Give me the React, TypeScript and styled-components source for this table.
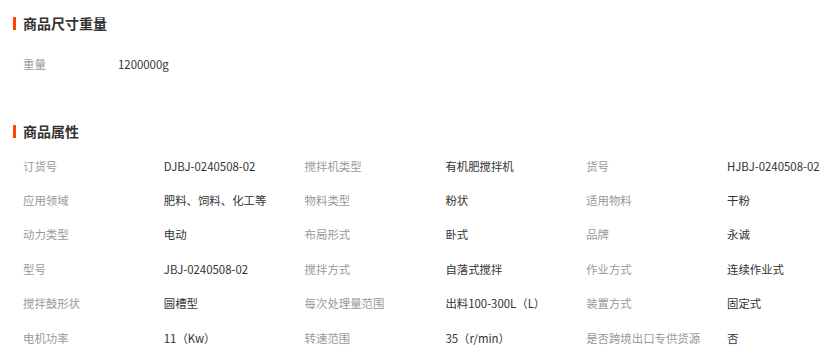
import React from "react";
import styled, { createGlobalStyle } from "styled-components";

const GlobalStyle = createGlobalStyle`
  body {
    margin: 0;
    background: #fff;
    font-family: "Noto Sans CJK SC", "Liberation Sans", sans-serif;
    font-size: 12px;
    color: #333;
  }
`;

const Page = styled.div`
  width: 830px;
  height: 355px;
  overflow: hidden;
  padding: 13px 0 0 13px;
  box-sizing: border-box;
`;

const Section = styled.section<{ $gap: number }>`
  margin-bottom: ${({ $gap }) => $gap}px;
`;

const Title = styled.h3`
  display: flex;
  align-items: center;
  margin: 0;
  height: 20px;
  font-size: 14px;
  font-weight: bold;
  color: #333;

  &::before {
    content: "";
    width: 3px;
    height: 13px;
    margin-right: 7px;
    background: #ff4400;
  }
`;

const Grid = styled.div<{ $cols: string; $top: number }>`
  display: grid;
  grid-template-columns: ${({ $cols }) => $cols};
  grid-auto-rows: 34.4px;
  padding: ${({ $top }) => $top}px 0 0 10px;
`;

const Cell = styled.div<{ $label?: boolean }>`
  display: flex;
  align-items: center;
  white-space: nowrap;
  font-size: 11.4px;
  color: ${({ $label }) => ($label ? "#999" : "#333")};
`;

const attrs: [string, string][] = [
  ["订货号", "DJBJ-0240508-02"],
  ["搅拌机类型", "有机肥搅拌机"],
  ["货号", "HJBJ-0240508-02"],
  ["应用领域", "肥料、饲料、化工等"],
  ["物料类型", "粉状"],
  ["适用物料", "干粉"],
  ["动力类型", "电动"],
  ["布局形式", "卧式"],
  ["品牌", "永诚"],
  ["型号", "JBJ-0240508-02"],
  ["搅拌方式", "自落式搅拌"],
  ["作业方式", "连续作业式"],
  ["搅拌鼓形状", "圆槽型"],
  ["每次处理量范围", "出料100-300L（L）"],
  ["装置方式", "固定式"],
  ["电机功率", "11（Kw）"],
  ["转速范围", "35（r/min）"],
  ["是否跨境出口专供货源", "否"],
];

export default function App() {
  return (
    <Page>
      <GlobalStyle />
      <Section $gap={40}>
        <Title>商品尺寸重量</Title>
        <Grid $cols="95px 1fr" $top={14}>
          <Cell $label>重量</Cell>
          <Cell>1200000g</Cell>
        </Grid>
      </Section>
      <Section $gap={0}>
        <Title>商品属性</Title>
        <Grid $cols="repeat(6, 140.8px)" $top={7}>
          {attrs.map(([k, v]) => (
            <React.Fragment key={k}>
              <Cell $label>{k}</Cell>
              <Cell>{v}</Cell>
            </React.Fragment>
          ))}
        </Grid>
      </Section>
    </Page>
  );
}
